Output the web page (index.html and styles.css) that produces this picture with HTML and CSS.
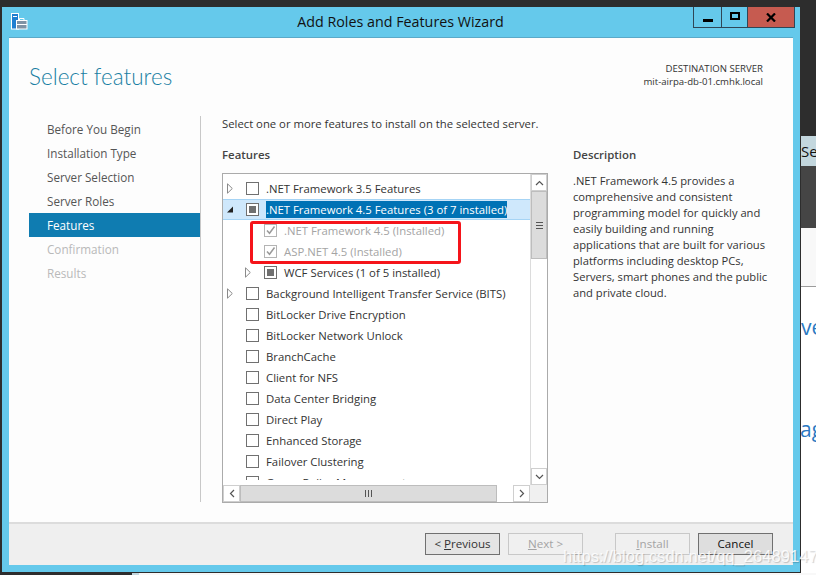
FILE: index.html
```html
<!DOCTYPE html>
<html lang="en">
<head>
<meta charset="utf-8">
<title>Add Roles and Features Wizard</title>
<link rel="stylesheet" href="styles.css">
</head>
<body>
<div class="desktop">
  <div class="back-right">
    <div class="back-tab">Se</div>
    <div class="back-band"></div>
    <div class="back-head"></div>
    <div class="back-body"><span class="back-ve">ve</span><span class="back-ag">ag</span></div>
  </div>
  <div class="back-bottom"><div class="back-bottom-tab"></div></div>

  <div class="window">
    <div class="titlebar">
      <svg class="app-icon" width="17" height="17" viewBox="0 0 17 17">
        <rect x="0.5" y="0.5" width="7" height="15.5" fill="#1f7fd0" stroke="#fff"/>
        <rect x="2" y="3" width="4" height="1" fill="#fff"/>
        <rect x="5.5" y="7.5" width="10.5" height="8.5" fill="#7f93a5" stroke="#fff"/>
        <path d="M5.5 11.5h10.5" stroke="#fff"/>
        <path d="M8.5 7.5v-2h4.5v2" fill="none" stroke="#fff"/>
      </svg>
      <div class="title">Add Roles and Features Wizard</div>
      <div class="win-buttons">
        <div class="win-btn win-min"><span class="min-glyph"></span></div>
        <div class="win-btn win-max"><span class="max-glyph"></span></div>
        <div class="win-btn win-close">
          <svg width="10" height="9" viewBox="0 0 10 9"><path d="M1 0.5l8 8M9 0.5l-8 8" stroke="#000" stroke-width="2.2"/></svg>
        </div>
      </div>
    </div>

    <div class="client">
      <div class="header">
        <h1 class="page-title">Select features</h1>
        <div class="dest">
          <div>DESTINATION SERVER</div>
          <div>mit-airpa-db-01.cmhk.local</div>
        </div>
      </div>

      <div class="main">
        <nav class="nav">
          <div class="nav-item">Before You Begin</div>
          <div class="nav-item">Installation Type</div>
          <div class="nav-item">Server Selection</div>
          <div class="nav-item">Server Roles</div>
          <div class="nav-item active">Features</div>
          <div class="nav-item disabled">Confirmation</div>
          <div class="nav-item disabled">Results</div>
        </nav>

        <section class="content">
          <p class="intro">Select one or more features to install on the selected server.</p>
          <div class="columns">
            <div class="features">
              <div class="col-title">Features</div>
              <div class="tree-box">
                <div class="tree-area">
                  <div class="tree-view">
                    <div class="tree-list">
                      <div class="row"><svg class="arrow" width="6" height="11" viewBox="0 0 6 11"><path d="M0.5 0.8L5.3 5.5 0.5 10.2z" fill="#fff" stroke="#8a8a8a"/></svg><span class="cb"></span><span class="lbl">.NET Framework 3.5 Features</span></div>
                      <div class="row selected"><svg class="arrow" width="6" height="11" viewBox="0 0 6 11"><path d="M0 8.5h6V2.5z" fill="#222"/></svg><span class="cb partial"></span><span class="lbl sel">.NET Framework 4.5 Features (3 of 7 installed)</span></div>
                      <div class="row lvl2 off"><span class="cb checked"><svg width="11" height="11" viewBox="0 0 11 11"><path d="M2 5.5l2.5 2.8L9.5 1.5" fill="none" stroke="#9a9a9a" stroke-width="1.5"/></svg></span><span class="lbl">.NET Framework 4.5 (Installed)</span></div>
                      <div class="row lvl2 off"><span class="cb checked"><svg width="11" height="11" viewBox="0 0 11 11"><path d="M2 5.5l2.5 2.8L9.5 1.5" fill="none" stroke="#9a9a9a" stroke-width="1.5"/></svg></span><span class="lbl">ASP.NET 4.5 (Installed)</span></div>
                      <div class="row lvl2b"><svg class="arrow" width="6" height="11" viewBox="0 0 6 11"><path d="M0.5 0.8L5.3 5.5 0.5 10.2z" fill="#fff" stroke="#8a8a8a"/></svg><span class="cb partial"></span><span class="lbl">WCF Services (1 of 5 installed)</span></div>
                      <div class="row"><svg class="arrow" width="6" height="11" viewBox="0 0 6 11"><path d="M0.5 0.8L5.3 5.5 0.5 10.2z" fill="#fff" stroke="#8a8a8a"/></svg><span class="cb"></span><span class="lbl">Background Intelligent Transfer Service (BITS)</span></div>
                      <div class="row leaf"><span class="cb"></span><span class="lbl">BitLocker Drive Encryption</span></div>
                      <div class="row leaf"><span class="cb"></span><span class="lbl">BitLocker Network Unlock</span></div>
                      <div class="row leaf"><span class="cb"></span><span class="lbl">BranchCache</span></div>
                      <div class="row leaf"><span class="cb"></span><span class="lbl">Client for NFS</span></div>
                      <div class="row leaf"><span class="cb"></span><span class="lbl">Data Center Bridging</span></div>
                      <div class="row leaf"><span class="cb"></span><span class="lbl">Direct Play</span></div>
                      <div class="row leaf"><span class="cb"></span><span class="lbl">Enhanced Storage</span></div>
                      <div class="row leaf"><span class="cb"></span><span class="lbl">Failover Clustering</span></div>
                      <div class="row leaf"><span class="cb"></span><span class="lbl">Group Policy Management</span></div>
                    </div>
                    <div class="red-box"></div>
                  </div>
                  <div class="vscroll">
                    <div class="sb-btn"><svg width="9" height="6" viewBox="0 0 9 6"><path d="M1 5l3.5-3.5L8 5" fill="none" stroke="#555" stroke-width="1.2"/></svg></div>
                    <div class="v-thumb"><span class="grip-h"></span></div>
                    <div class="sb-fill"></div>
                    <div class="sb-btn"><svg width="9" height="6" viewBox="0 0 9 6"><path d="M1 1l3.5 3.5L8 1" fill="none" stroke="#555" stroke-width="1.2"/></svg></div>
                  </div>
                </div>
                <div class="hscroll">
                  <div class="sb-btn h"><svg width="6" height="9" viewBox="0 0 6 9"><path d="M5 1L1.5 4.5 5 8" fill="none" stroke="#555" stroke-width="1.2"/></svg></div>
                  <div class="h-thumb"><span class="grip-v"></span></div>
                  <div class="sb-fill"></div>
                  <div class="sb-btn h"><svg width="6" height="9" viewBox="0 0 6 9"><path d="M1 1l3.5 3.5L1 8" fill="none" stroke="#555" stroke-width="1.2"/></svg></div>
                  <div class="corner"></div>
                </div>
              </div>
            </div>
            <div class="desc">
              <div class="col-title">Description</div>
              <p class="desc-text">.NET Framework 4.5 provides a comprehensive and consistent programming model for quickly and easily building and running applications that are built for various platforms including desktop PCs, Servers, smart phones and the public and private cloud.</p>
            </div>
          </div>
        </section>
      </div>

      <div class="footer">
        <div class="btn prev">&lt; <u>P</u>revious</div>
        <div class="btn dim"><u>N</u>ext &gt;</div>
        <div class="btn dim install"><u>I</u>nstall</div>
        <div class="btn cancel">Cancel</div>
      </div>
    </div>
  </div>
  <div class="watermark">https://blog.csdn.net/qq_26489147</div>
</div>
</body>
</html>
```
FILE: styles.css
```css
* { box-sizing: border-box; }
html, body { margin: 0; padding: 0; }
body { width: 816px; height: 575px; overflow: hidden; background: #2d2d2d; font-family: "Open Sans", "Noto Sans", sans-serif; font-size: 12px; color: #333; }
.desktop { position: relative; width: 816px; height: 575px; background: #2d2d2d; overflow: hidden; }

.back-right { position: absolute; left: 801px; top: 136px; width: 15px; height: 439px; display: flex; flex-direction: column; }
.back-tab { height: 30px; background: #c3d7de; color: #111; font-size: 15px; line-height: 30px; white-space: nowrap; overflow: hidden; }
.back-band { height: 62px; background: #454545; }
.back-head { height: 59px; background: #f8f8f8; border-bottom: 1px solid #9c9c9c; }
.back-body { flex: 1; background: #fff; position: relative; overflow: hidden; color: #2b79c2; font-size: 21px; }
.back-ve { position: absolute; left: 0; top: 26px; }
.back-ag { position: absolute; left: -1px; top: 128px; }
.back-bottom { position: absolute; left: 132px; top: 573px; width: 684px; height: 2px; background: #f8f8f8; }
.back-bottom-tab { width: 7px; height: 2px; background: #c3d7de; }

.window { position: absolute; left: 2px; top: 7px; width: 799px; height: 566px; background: #65c9eb; border-right: 1px solid #2d2d2d; border-bottom: 1px solid #2d2d2d; padding: 0 7px 7px 7px; display: flex; flex-direction: column; }
.titlebar { height: 30px; flex: none; position: relative; display: flex; justify-content: center; }
.app-icon { position: absolute; left: 2px; top: 6px; }
.title { font-size: 14.3px; line-height: 30px; color: #111; margin-left: -1px; }
.win-buttons { position: absolute; right: -2px; top: 0; height: 21px; display: flex; border: 1px solid #2f4656; border-top: 0; }
.win-btn { height: 20px; display: flex; align-items: center; justify-content: center; }
.win-min { width: 28px; border-right: 1px solid #2f4656; }
.win-max { width: 26px; border-right: 1px solid #2f4656; }
.win-close { width: 46px; background: #c65b50; }
.min-glyph { width: 10px; height: 3px; background: #000; margin-top: 6px; }
.max-glyph { width: 10px; height: 8px; border: 2px solid #000; margin-top: -2px; }

.client { flex: 1; background: #fdfdfd; display: flex; flex-direction: column; min-height: 0; border-top: 1px solid #5ba9c8; }
.header { height: 78px; flex: none; display: flex; justify-content: space-between; padding: 0 30px 0 20px; }
.page-title { margin: 24px 0 0; font-family: Lato, "Open Sans", sans-serif; font-size: 22.5px; font-weight: 300; color: #1a7fa3; line-height: 30px; }
.dest { margin-top: 24px; text-align: right; font-size: 9.6px; line-height: 13px; color: #333; }

.main { flex: 1; display: flex; min-height: 0; }
.nav { width: 192px; height: 386px; flex: none; padding-top: 1px; border-right: 1px solid #c8c8c8; }
.nav-item { height: 24px; line-height: 24px; padding-left: 18px; margin-left: 20px; font-size: 11.7px; color: #555; width: 171px; }
.nav-item.active { background: #0f7cb1; color: #fff; }
.nav-item.disabled { color: #b9b9b9; }

.content { flex: 1; padding-left: 21px; min-width: 0; }
.intro { margin: 0; font-size: 11.3px; line-height: 16px; color: #333; }
.columns { display: flex; margin-top: 15px; }
.features { width: 326px; flex: none; }
.col-title { font-size: 11.4px; font-weight: 600; line-height: 16px; color: #444; height: 16px; }
.tree-box { margin-top: 10px; width: 326px; height: 330px; border: 1px solid #ababab; background: #fff; display: flex; flex-direction: column; }
.tree-area { height: 311px; display: flex; flex: none; }
.tree-view { width: 307px; height: 306px; overflow: hidden; position: relative; flex: none; }
.tree-list { padding-top: 4px; }
.row { height: 21px; display: flex; align-items: center; padding-left: 4px; white-space: nowrap; font-size: 11.35px; color: #333; border: 1px solid transparent; border-left: 0; border-right: 0; }
.row.selected { background: #cfe8fc; border-color: #a6d4f5; }
.row.leaf { padding-left: 23px; }
.lvl2 { padding-left: 41px; }
.lvl2b { padding-left: 22px; }
.arrow { margin-right: 13px; flex: none; }
.cb { width: 13px; height: 13px; border: 1px solid #707070; background: #fff; margin-right: 7px; flex: none; display: flex; align-items: center; justify-content: center; }
.cb.partial::after { content: ""; width: 7px; height: 7px; background: #707070; }
.cb.checked { border-color: #b4b4b4; }
.lbl { line-height: 17px; }
.lbl.sel { background: #0072b5; color: #fff; }
.off { color: #a4a4a4; }
.red-box { position: absolute; left: 27px; top: 47px; width: 211px; height: 43px; border: 3px solid #f5141a; border-radius: 3px; }

.vscroll { width: 17px; flex: none; display: flex; flex-direction: column; background: #fff; border-left: 1px solid #dcdcdc; }
.sb-btn { height: 17px; flex: none; display: flex; align-items: center; justify-content: center; background: #fff; border: 1px solid #cfcfcf; }
.v-thumb { height: 68px; flex: none; background: #dcdcdc; border: 1px solid #bdbdbd; display: flex; align-items: center; justify-content: center; }
.grip-h { width: 7px; height: 7px; border-top: 1px solid #555; border-bottom: 1px solid #555; background: linear-gradient(#555, #555) center / 100% 1px no-repeat; }
.sb-fill { flex: 1; }
.hscroll { height: 17px; display: flex; flex: none; background: #fff; }
.sb-btn.h { width: 17px; height: 17px; }
.h-thumb { width: 257px; flex: none; background: #dcdcdc; border: 1px solid #bdbdbd; display: flex; align-items: center; justify-content: center; }
.grip-v { width: 7px; height: 7px; border-left: 1px solid #555; border-right: 1px solid #555; background: linear-gradient(#555, #555) center / 1px 100% no-repeat; }
.corner { width: 17px; background: #f0f0f0; flex: none; }

.desc { margin-left: 25px; width: 205px; }
.desc-text { margin: 10px 0 0; font-size: 11.2px; line-height: 16px; color: #333; }

.footer { height: 43px; flex: none; background: #efefef; border-top: 2px solid #dcdcdc; display: flex; padding: 9px 20px 0 0; justify-content: flex-end; }
.btn { width: 75px; height: 22px; line-height: 20px; text-align: center; font-size: 11.6px; border: 1px solid #707070; background: #e1e1e1; color: #333; margin-left: 8px; }
.btn.prev { background: #e4e4e4; }
.btn.dim { color: #a4a4a4; background: #f0f0f0; border-color: #c8c8c8; }
.btn.install { margin-left: 32px; }
.btn.cancel { color: #111; background: #dedede; }

.watermark { position: absolute; left: 563px; top: 546px; font-family: "Liberation Sans", Arial, sans-serif; font-size: 16.6px; line-height: 22px; color: rgba(255, 255, 255, 0.85); text-shadow: 1px 1px 1px rgba(0, 0, 0, 0.2); white-space: nowrap; }
```
